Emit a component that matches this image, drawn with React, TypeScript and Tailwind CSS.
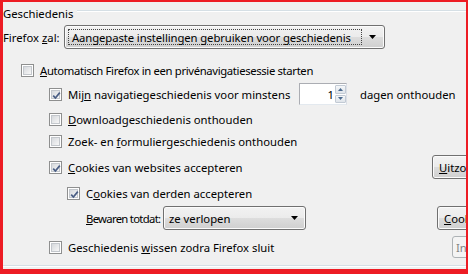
import * as React from 'react';

const btnBg = "bg-[linear-gradient(#f2f2f2,#ebebeb_50%,#dddddd_50%,#cfcfcf)]";

function Check({ checked }: { checked?: boolean }) {
    return (
        <span className="flex h-[13px] w-[13px] shrink-0 border border-[#8e8f8f] bg-white p-[1px]">
            <span className="relative flex h-full w-full items-center justify-center border border-[#c3c7cc] bg-[linear-gradient(135deg,#d6d9dd,#f7f7f7)]">
                {checked && (
                    <svg width="11" height="11" viewBox="0 0 11 11" className="absolute -left-[1px] -top-[1px]">
                        <path d="M2.2 5.6 L4.4 8 L8.8 2.6" fill="none" stroke="#4a5e85" strokeWidth="1.7" />
                    </svg>
                )}
            </span>
        </span>
    );
}

function Arrow() {
    return (
        <svg width="7" height="4" viewBox="0 0 7 4">
            <path d="M0 0 H7 L3.5 4 Z" fill="#000" />
        </svg>
    );
}

function Row({ className, children }: { className: string, children: React.ReactNode }) {
    return <div className={"flex w-[540px] items-center whitespace-nowrap " + className}>{children}</div>;
}

export default function App() {
    return (
        <div className="h-[274px] w-[468px] overflow-hidden border-t-2 border-r-2 border-b-[5px] border-l-[3px] border-[#ed1c24] bg-[#f0f0f0] font-['Noto_Sans',sans-serif] text-[11.3px] leading-[15px] text-black">
            <div className="flex h-full flex-col overflow-hidden">

                {/* group title */}
                <Row className="h-[22px]">
                    <span>Geschiedenis</span>
                    <div className="ml-[4px] h-[2px] flex-1 self-start mt-[8px] border-t border-t-[#d5dfe5] border-b border-b-white" />
                </Row>

                <Row className="h-[26px]">
                    <span className="w-[61px] shrink-0">Firefox <u>z</u>al:</span>
                    <div className={"flex h-[24px] w-[321px] items-center rounded-[3px] border border-[#707070] p-[3px] shadow-[inset_0_0_0_1px_#fbfbfb] " + btnBg}>
                        <span className="flex h-full flex-1 items-center border border-dotted border-[#444] pl-[3px] tracking-[-0.1px]">
                            Aangepaste instellingen gebruiken voor geschiedenis
                        </span>
                        <span className="flex w-[19px] justify-center pl-[2px]"><Arrow /></span>
                    </div>
                </Row>

                <Row className="mt-[7px] h-[26px] pl-[18px] gap-[6px]">
                    <Check />
                    <span className="tracking-[-0.35px]"><u>A</u>utomatisch Firefox in een privénavigatiesessie starten</span>
                </Row>

                <Row className="h-[22px] pl-[46px]">
                    <Check checked />
                    <span className="ml-[6px] w-[231px]">Mij<u>n</u> navigatiegeschiedenis voor minstens</span>
                    <div className="flex h-[22px] w-[48px] border border-[#abadb3] border-r-[#dbdfe6] border-b-[#e3e9ef] bg-white">
                        <span className="flex flex-1 items-center justify-end pr-[1px]">1</span>
                        <span className="flex w-[11px] flex-col gap-[1px] py-[1px]">
                            <span className="flex flex-1 items-center justify-center rounded-[1px] border border-[#c2cad4] bg-[linear-gradient(#f5f7f9,#dfe4ea)]">
                                <svg width="5" height="3" viewBox="0 0 5 3"><path d="M0 3 L2.5 0 L5 3 Z" fill="#4b6a8e" /></svg>
                            </span>
                            <span className="flex flex-1 items-center justify-center rounded-[1px] border border-[#c2cad4] bg-[linear-gradient(#f5f7f9,#dfe4ea)]">
                                <svg width="5" height="3" viewBox="0 0 5 3"><path d="M0 0 L5 0 L2.5 3 Z" fill="#4b6a8e" /></svg>
                            </span>
                        </span>
                    </div>
                    <span className="ml-[13px]">dagen onthouden</span>
                </Row>

                <Row className="mt-[2px] h-[24px] pl-[46px] gap-[6px]">
                    <Check />
                    <span><u>D</u>ownloadgeschiedenis onthouden</span>
                </Row>

                <Row className="h-[20px] pl-[46px] gap-[6px]">
                    <Check />
                    <span>Zoek- en <u>f</u>ormuliergeschiedenis onthouden</span>
                </Row>

                <Row className="mt-[3px] h-[26px] pl-[46px] gap-[6px]">
                    <Check checked />
                    <span><u>C</u>ookies van websites accepteren</span>
                    <button className={"ml-auto flex h-[24px] w-[111px] items-center rounded-[3px] border border-[#707070] pl-[6px] shadow-[inset_0_0_0_1px_#fbfbfb] " + btnBg}>
                        <u>U</u>itzonderingen…
                    </button>
                </Row>

                <Row className="mt-[1px] h-[24px] pl-[64px] gap-[6px]">
                    <Check checked />
                    <span>C<u>o</u>okies van derden accepteren</span>
                </Row>

                <Row className="h-[26px] pl-[83px]">
                    <span className="w-[77px] shrink-0 tracking-[-0.7px]"><u>B</u>ewaren totdat:</span>
                    <div className={"flex h-[24px] w-[143px] items-center rounded-[3px] border border-[#707070] pl-[5px] shadow-[inset_0_0_0_1px_#fbfbfb] " + btnBg}>
                        <span className="flex-1">ze verlopen</span>
                        <span className="flex w-[22px] justify-center"><Arrow /></span>
                    </div>
                    <button className={"ml-auto flex h-[24px] w-[106px] items-center rounded-[3px] border border-[#707070] pl-[6px] shadow-[inset_0_0_0_1px_#fbfbfb] " + btnBg}>
                        <u>C</u>ookies tonen…
                    </button>
                </Row>

                <Row className="mt-[4px] h-[24px] pl-[46px] gap-[6px]">
                    <Check />
                    <span>Geschiedenis <u>w</u>issen zodra Firefox sluit</span>
                    <button className="ml-auto flex h-[22px] w-[91px] items-center rounded-[3px] border border-[#adb2b5] bg-[#f4f4f4] pl-[3px] text-[#838383]">
                        Instellingen…
                    </button>
                </Row>

                <div className="mt-[6px] h-[2px] w-full border-t border-t-[#d5dfe5] border-b border-b-white" />
            </div>
        </div>
    );
}
